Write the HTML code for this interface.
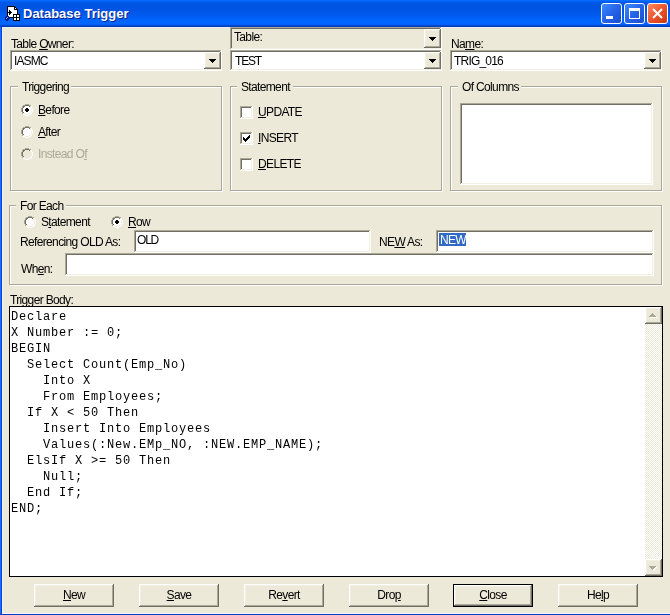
<!DOCTYPE html>
<html><head><meta charset="utf-8">
<style>
html,body{margin:0;padding:0;}
body{width:670px;height:615px;position:relative;overflow:hidden;background:#ece9d8;font-family:"Liberation Sans",sans-serif;}
div{position:absolute;box-sizing:border-box;}
.t{font-size:12px;line-height:14px;letter-spacing:-0.65px;white-space:nowrap;color:#000;will-change:transform;}
u{text-decoration:underline;text-decoration-thickness:1px;}
.dis{color:#aca899;}
.sunk{background:#fff;box-shadow:inset -1px -1px 0 #fff,inset 1px 1px 0 #aca899,inset -2px -2px 0 #f1efe2,inset 2px 2px 0 #716f64;}
.raised{background:#ece9d8;box-shadow:inset -1px -1px 0 #716f64,inset 1px 1px 0 #fff,inset -2px -2px 0 #aca899,inset 2px 2px 0 #f1efe2;}
.gl{border:1px solid #fff;}
.gd{border:1px solid #aca899;}
.glab{background:#ece9d8;}
.arrow{width:0;height:0;border-left:4px solid transparent;border-right:4px solid transparent;border-top:4px solid #000;}
.code{will-change:transform;font-family:"Liberation Mono",monospace;font-size:12px;letter-spacing:0.8px;line-height:16px;white-space:pre;color:#000;}
.btn{width:80px;height:23px;}
.btn .t{width:80px;text-align:center;left:0;top:4px;}
</style></head><body>

<!-- window frame -->
<div style="left:0;top:0;width:2px;height:615px;background:linear-gradient(90deg,#1c6cff 0,#1c6cff 1px,#0040d8 1px,#0040d8 2px);"></div>
<div style="left:2px;top:27px;width:1px;height:587px;background:#f4f6ff;"></div>
<div style="left:2px;top:613px;width:668px;height:1px;background:#f4f6ff;"></div>
<div style="left:0;top:614px;width:670px;height:1px;background:#0038c8;"></div>

<!-- title bar -->
<div style="left:0;top:0;width:670px;height:27px;background:linear-gradient(180deg,#0a6cff 0px,#0a6cff 1px,#0062f4 1px,#0062f4 2px,#0058e8 2px,#0054e3 6px,#0054e3 9px,#0058ea 13px,#0060f6 18px,#0066ff 21px,#0066ff 24px,#005af0 25px,#0a3cb4 26px,#0a3cb4 27px);"></div>
<div style="left:2px;top:27px;width:668px;height:1px;background:#e6eefc;"></div>
<!-- icon -->
<svg style="position:absolute;left:4px;top:6px;" width="17" height="15" shape-rendering="crispEdges"><rect x="3" y="0" width="8" height="1" fill="#000000"/><rect x="3" y="1" width="1" height="1" fill="#000000"/><rect x="4" y="1" width="6" height="1" fill="#ffffff"/><rect x="10" y="1" width="2" height="1" fill="#000000"/><rect x="3" y="2" width="1" height="1" fill="#000000"/><rect x="4" y="2" width="6" height="1" fill="#ffffff"/><rect x="10" y="2" width="1" height="1" fill="#000000"/><rect x="11" y="2" width="1" height="1" fill="#ffffff"/><rect x="12" y="2" width="1" height="1" fill="#000000"/><rect x="3" y="3" width="1" height="1" fill="#000000"/><rect x="4" y="3" width="6" height="1" fill="#ffffff"/><rect x="10" y="3" width="4" height="1" fill="#000000"/><rect x="3" y="4" width="1" height="1" fill="#000000"/><rect x="4" y="4" width="1" height="1" fill="#ffffff"/><rect x="5" y="4" width="1" height="1" fill="#000000"/><rect x="6" y="4" width="7" height="1" fill="#ffffff"/><rect x="13" y="4" width="1" height="1" fill="#000000"/><rect x="3" y="5" width="1" height="1" fill="#000000"/><rect x="4" y="5" width="1" height="1" fill="#ffffff"/><rect x="5" y="5" width="2" height="1" fill="#000000"/><rect x="7" y="5" width="6" height="1" fill="#ffffff"/><rect x="13" y="5" width="1" height="1" fill="#000000"/><rect x="3" y="6" width="5" height="1" fill="#000000"/><rect x="8" y="6" width="5" height="1" fill="#ffffff"/><rect x="13" y="6" width="1" height="1" fill="#000000"/><rect x="3" y="7" width="1" height="1" fill="#000000"/><rect x="4" y="7" width="1" height="1" fill="#ffffff"/><rect x="5" y="7" width="2" height="1" fill="#000000"/><rect x="7" y="7" width="6" height="1" fill="#ffffff"/><rect x="13" y="7" width="1" height="1" fill="#000000"/><rect x="3" y="8" width="1" height="1" fill="#000000"/><rect x="4" y="8" width="1" height="1" fill="#ffffff"/><rect x="5" y="8" width="1" height="1" fill="#000000"/><rect x="6" y="8" width="3" height="1" fill="#ffffff"/><rect x="9" y="8" width="7" height="1" fill="#000000"/><rect x="3" y="9" width="1" height="1" fill="#000000"/><rect x="4" y="9" width="5" height="1" fill="#ffffff"/><rect x="9" y="9" width="1" height="1" fill="#000000"/><rect x="10" y="9" width="2" height="1" fill="#ffffff"/><rect x="12" y="9" width="1" height="1" fill="#000000"/><rect x="13" y="9" width="2" height="1" fill="#ffffff"/><rect x="15" y="9" width="1" height="1" fill="#000000"/><rect x="2" y="10" width="3" height="1" fill="#001a80"/><rect x="5" y="10" width="4" height="1" fill="#ffffff"/><rect x="9" y="10" width="1" height="1" fill="#000000"/><rect x="10" y="10" width="2" height="1" fill="#ffffff"/><rect x="12" y="10" width="1" height="1" fill="#000000"/><rect x="13" y="10" width="2" height="1" fill="#ffffff"/><rect x="15" y="10" width="1" height="1" fill="#000000"/><rect x="1" y="11" width="2" height="1" fill="#001a80"/><rect x="3" y="11" width="1" height="1" fill="#8cb8ff"/><rect x="4" y="11" width="2" height="1" fill="#001a80"/><rect x="6" y="11" width="10" height="1" fill="#000000"/><rect x="1" y="12" width="1" height="1" fill="#001a80"/><rect x="2" y="12" width="1" height="1" fill="#8cb8ff"/><rect x="3" y="12" width="3" height="1" fill="#001a80"/><rect x="9" y="12" width="1" height="1" fill="#000000"/><rect x="10" y="12" width="2" height="1" fill="#ffffff"/><rect x="12" y="12" width="1" height="1" fill="#000000"/><rect x="13" y="12" width="2" height="1" fill="#ffffff"/><rect x="15" y="12" width="1" height="1" fill="#000000"/><rect x="1" y="13" width="4" height="1" fill="#001a80"/><rect x="9" y="13" width="1" height="1" fill="#000000"/><rect x="10" y="13" width="2" height="1" fill="#ffffff"/><rect x="12" y="13" width="1" height="1" fill="#000000"/><rect x="13" y="13" width="2" height="1" fill="#ffffff"/><rect x="15" y="13" width="1" height="1" fill="#000000"/><rect x="2" y="14" width="2" height="1" fill="#001a80"/><rect x="9" y="14" width="7" height="1" fill="#000000"/></svg>
<div style="left:23px;top:6px;font:bold 13px/16px 'Liberation Sans';color:#fff;white-space:nowrap;text-shadow:1px 1px 0 #0a1e8a;">Database Trigger</div>

<!-- caption buttons -->
<div style="left:601px;top:3px;width:21px;height:21px;border:1px solid #fff;border-radius:3px;background:linear-gradient(135deg,#3c8cff 0%,#2663e8 50%,#1a4fd0 100%);">
  <div style="left:4px;top:12px;width:7px;height:3px;background:#fff;"></div>
</div>
<div style="left:624px;top:3px;width:21px;height:21px;border:1px solid #fff;border-radius:3px;background:linear-gradient(135deg,#3c8cff 0%,#2663e8 50%,#1a4fd0 100%);">
  <div style="left:4px;top:4px;width:11px;height:11px;border:1px solid #fff;border-top-width:3px;"></div>
</div>
<div style="left:647px;top:3px;width:21px;height:21px;border:1px solid #fff;border-radius:3px;background:linear-gradient(135deg,#ff8a5a 0%,#e8502a 55%,#c83a14 100%);">
  <svg style="position:absolute;left:3px;top:3px" width="13" height="13" viewBox="0 0 13 13"><path d="M2 2 L11 11 M11 2 L2 11" stroke="#fff" stroke-width="2"/></svg>
</div>

<!-- Table Owner -->
<div class="t" style="left:11px;top:37px;">Table <u>O</u>wner:</div>
<div class="sunk" style="left:10px;top:50px;width:212px;height:21px;"></div>
<div class="t" style="left:14px;top:54px;letter-spacing:-0.9px;">IASMC</div>
<div class="raised" style="left:204px;top:52px;width:17px;height:17px;"><svg style="position:absolute;left:5px;top:7px;" width="8" height="5" shape-rendering="crispEdges"><rect x="0" y="0" width="7" height="1" fill="#000"/><rect x="1" y="1" width="5" height="1" fill="#000"/><rect x="2" y="2" width="3" height="1" fill="#000"/><rect x="3" y="3" width="1" height="1" fill="#000"/></svg></div>

<!-- Table: -->
<div class="sunk" style="left:230px;top:27px;width:212px;height:23px;background:#ece9d8;"></div>
<div class="t" style="left:234px;top:30px;">Table:</div>
<div class="raised" style="left:424px;top:29px;width:17px;height:19px;"><svg style="position:absolute;left:5px;top:8px;" width="8" height="5" shape-rendering="crispEdges"><rect x="0" y="0" width="7" height="1" fill="#000"/><rect x="1" y="1" width="5" height="1" fill="#000"/><rect x="2" y="2" width="3" height="1" fill="#000"/><rect x="3" y="3" width="1" height="1" fill="#000"/></svg></div>
<div class="sunk" style="left:230px;top:50px;width:212px;height:21px;"></div>
<div class="t" style="left:235px;top:54px;letter-spacing:-1.2px;">TEST</div>
<div class="raised" style="left:424px;top:52px;width:17px;height:17px;"><svg style="position:absolute;left:5px;top:7px;" width="8" height="5" shape-rendering="crispEdges"><rect x="0" y="0" width="7" height="1" fill="#000"/><rect x="1" y="1" width="5" height="1" fill="#000"/><rect x="2" y="2" width="3" height="1" fill="#000"/><rect x="3" y="3" width="1" height="1" fill="#000"/></svg></div>

<!-- Name -->
<div class="t" style="left:451px;top:37px;">Na<u>m</u>e:</div>
<div class="sunk" style="left:450px;top:50px;width:212px;height:21px;"></div>
<div class="t" style="left:454px;top:54px;letter-spacing:-0.8px;">TRIG_016</div>
<div class="raised" style="left:644px;top:52px;width:17px;height:17px;"><svg style="position:absolute;left:5px;top:7px;" width="8" height="5" shape-rendering="crispEdges"><rect x="0" y="0" width="7" height="1" fill="#000"/><rect x="1" y="1" width="5" height="1" fill="#000"/><rect x="2" y="2" width="3" height="1" fill="#000"/><rect x="3" y="3" width="1" height="1" fill="#000"/></svg></div>

<!-- Triggering group -->
<div class="gl" style="left:11px;top:87px;width:212px;height:105px;"></div>
<div class="gd" style="left:10px;top:86px;width:212px;height:105px;"></div>
<div class="t glab" style="left:18px;top:80px;padding:0 2px 0 4px;">Triggering</div>

<svg style="position:absolute;left:21px;top:104px;" width="12" height="12" shape-rendering="crispEdges"><rect x="4" y="0" width="4" height="1" fill="#aca899"/><rect x="2" y="1" width="2" height="1" fill="#aca899"/><rect x="4" y="1" width="4" height="1" fill="#716f64"/><rect x="8" y="1" width="2" height="1" fill="#aca899"/><rect x="1" y="2" width="1" height="1" fill="#aca899"/><rect x="2" y="2" width="2" height="1" fill="#716f64"/><rect x="4" y="2" width="4" height="1" fill="#ffffff"/><rect x="8" y="2" width="1" height="1" fill="#716f64"/><rect x="9" y="2" width="1" height="1" fill="#f1efe2"/><rect x="10" y="2" width="1" height="1" fill="#ffffff"/><rect x="1" y="3" width="1" height="1" fill="#aca899"/><rect x="2" y="3" width="1" height="1" fill="#716f64"/><rect x="3" y="3" width="6" height="1" fill="#ffffff"/><rect x="9" y="3" width="1" height="1" fill="#f1efe2"/><rect x="10" y="3" width="1" height="1" fill="#ffffff"/><rect x="0" y="4" width="1" height="1" fill="#aca899"/><rect x="1" y="4" width="1" height="1" fill="#716f64"/><rect x="2" y="4" width="3" height="1" fill="#ffffff"/><rect x="5" y="4" width="2" height="1" fill="#000"/><rect x="7" y="4" width="3" height="1" fill="#ffffff"/><rect x="10" y="4" width="1" height="1" fill="#f1efe2"/><rect x="11" y="4" width="1" height="1" fill="#ffffff"/><rect x="0" y="5" width="1" height="1" fill="#aca899"/><rect x="1" y="5" width="1" height="1" fill="#716f64"/><rect x="2" y="5" width="2" height="1" fill="#ffffff"/><rect x="4" y="5" width="4" height="1" fill="#000"/><rect x="8" y="5" width="2" height="1" fill="#ffffff"/><rect x="10" y="5" width="1" height="1" fill="#f1efe2"/><rect x="11" y="5" width="1" height="1" fill="#ffffff"/><rect x="0" y="6" width="1" height="1" fill="#aca899"/><rect x="1" y="6" width="1" height="1" fill="#716f64"/><rect x="2" y="6" width="2" height="1" fill="#ffffff"/><rect x="4" y="6" width="4" height="1" fill="#000"/><rect x="8" y="6" width="2" height="1" fill="#ffffff"/><rect x="10" y="6" width="1" height="1" fill="#f1efe2"/><rect x="11" y="6" width="1" height="1" fill="#ffffff"/><rect x="0" y="7" width="1" height="1" fill="#aca899"/><rect x="1" y="7" width="1" height="1" fill="#716f64"/><rect x="2" y="7" width="3" height="1" fill="#ffffff"/><rect x="5" y="7" width="2" height="1" fill="#000"/><rect x="7" y="7" width="3" height="1" fill="#ffffff"/><rect x="10" y="7" width="1" height="1" fill="#f1efe2"/><rect x="11" y="7" width="1" height="1" fill="#ffffff"/><rect x="1" y="8" width="1" height="1" fill="#aca899"/><rect x="2" y="8" width="1" height="1" fill="#716f64"/><rect x="3" y="8" width="6" height="1" fill="#ffffff"/><rect x="9" y="8" width="1" height="1" fill="#f1efe2"/><rect x="10" y="8" width="1" height="1" fill="#ffffff"/><rect x="1" y="9" width="1" height="1" fill="#aca899"/><rect x="2" y="9" width="2" height="1" fill="#f1efe2"/><rect x="4" y="9" width="4" height="1" fill="#ffffff"/><rect x="8" y="9" width="2" height="1" fill="#f1efe2"/><rect x="10" y="9" width="1" height="1" fill="#ffffff"/><rect x="2" y="10" width="2" height="1" fill="#ffffff"/><rect x="4" y="10" width="4" height="1" fill="#f1efe2"/><rect x="8" y="10" width="2" height="1" fill="#ffffff"/><rect x="4" y="11" width="4" height="1" fill="#ffffff"/></svg>
<div class="t" style="left:38px;top:103px;"><u>B</u>efore</div>
<svg style="position:absolute;left:21px;top:126px;" width="12" height="12" shape-rendering="crispEdges"><rect x="4" y="0" width="4" height="1" fill="#aca899"/><rect x="2" y="1" width="2" height="1" fill="#aca899"/><rect x="4" y="1" width="4" height="1" fill="#716f64"/><rect x="8" y="1" width="2" height="1" fill="#aca899"/><rect x="1" y="2" width="1" height="1" fill="#aca899"/><rect x="2" y="2" width="2" height="1" fill="#716f64"/><rect x="4" y="2" width="4" height="1" fill="#ffffff"/><rect x="8" y="2" width="1" height="1" fill="#716f64"/><rect x="9" y="2" width="1" height="1" fill="#f1efe2"/><rect x="10" y="2" width="1" height="1" fill="#ffffff"/><rect x="1" y="3" width="1" height="1" fill="#aca899"/><rect x="2" y="3" width="1" height="1" fill="#716f64"/><rect x="3" y="3" width="6" height="1" fill="#ffffff"/><rect x="9" y="3" width="1" height="1" fill="#f1efe2"/><rect x="10" y="3" width="1" height="1" fill="#ffffff"/><rect x="0" y="4" width="1" height="1" fill="#aca899"/><rect x="1" y="4" width="1" height="1" fill="#716f64"/><rect x="2" y="4" width="8" height="1" fill="#ffffff"/><rect x="10" y="4" width="1" height="1" fill="#f1efe2"/><rect x="11" y="4" width="1" height="1" fill="#ffffff"/><rect x="0" y="5" width="1" height="1" fill="#aca899"/><rect x="1" y="5" width="1" height="1" fill="#716f64"/><rect x="2" y="5" width="8" height="1" fill="#ffffff"/><rect x="10" y="5" width="1" height="1" fill="#f1efe2"/><rect x="11" y="5" width="1" height="1" fill="#ffffff"/><rect x="0" y="6" width="1" height="1" fill="#aca899"/><rect x="1" y="6" width="1" height="1" fill="#716f64"/><rect x="2" y="6" width="8" height="1" fill="#ffffff"/><rect x="10" y="6" width="1" height="1" fill="#f1efe2"/><rect x="11" y="6" width="1" height="1" fill="#ffffff"/><rect x="0" y="7" width="1" height="1" fill="#aca899"/><rect x="1" y="7" width="1" height="1" fill="#716f64"/><rect x="2" y="7" width="8" height="1" fill="#ffffff"/><rect x="10" y="7" width="1" height="1" fill="#f1efe2"/><rect x="11" y="7" width="1" height="1" fill="#ffffff"/><rect x="1" y="8" width="1" height="1" fill="#aca899"/><rect x="2" y="8" width="1" height="1" fill="#716f64"/><rect x="3" y="8" width="6" height="1" fill="#ffffff"/><rect x="9" y="8" width="1" height="1" fill="#f1efe2"/><rect x="10" y="8" width="1" height="1" fill="#ffffff"/><rect x="1" y="9" width="1" height="1" fill="#aca899"/><rect x="2" y="9" width="2" height="1" fill="#f1efe2"/><rect x="4" y="9" width="4" height="1" fill="#ffffff"/><rect x="8" y="9" width="2" height="1" fill="#f1efe2"/><rect x="10" y="9" width="1" height="1" fill="#ffffff"/><rect x="2" y="10" width="2" height="1" fill="#ffffff"/><rect x="4" y="10" width="4" height="1" fill="#f1efe2"/><rect x="8" y="10" width="2" height="1" fill="#ffffff"/><rect x="4" y="11" width="4" height="1" fill="#ffffff"/></svg>
<div class="t" style="left:38px;top:125px;"><u>A</u>fter</div>
<svg style="position:absolute;left:21px;top:148px;" width="12" height="12" shape-rendering="crispEdges"><rect x="4" y="0" width="4" height="1" fill="#aca899"/><rect x="2" y="1" width="2" height="1" fill="#aca899"/><rect x="4" y="1" width="4" height="1" fill="#716f64"/><rect x="8" y="1" width="2" height="1" fill="#aca899"/><rect x="1" y="2" width="1" height="1" fill="#aca899"/><rect x="2" y="2" width="2" height="1" fill="#716f64"/><rect x="4" y="2" width="4" height="1" fill="#ece9d8"/><rect x="8" y="2" width="1" height="1" fill="#716f64"/><rect x="9" y="2" width="1" height="1" fill="#f1efe2"/><rect x="10" y="2" width="1" height="1" fill="#ffffff"/><rect x="1" y="3" width="1" height="1" fill="#aca899"/><rect x="2" y="3" width="1" height="1" fill="#716f64"/><rect x="3" y="3" width="6" height="1" fill="#ece9d8"/><rect x="9" y="3" width="1" height="1" fill="#f1efe2"/><rect x="10" y="3" width="1" height="1" fill="#ffffff"/><rect x="0" y="4" width="1" height="1" fill="#aca899"/><rect x="1" y="4" width="1" height="1" fill="#716f64"/><rect x="2" y="4" width="8" height="1" fill="#ece9d8"/><rect x="10" y="4" width="1" height="1" fill="#f1efe2"/><rect x="11" y="4" width="1" height="1" fill="#ffffff"/><rect x="0" y="5" width="1" height="1" fill="#aca899"/><rect x="1" y="5" width="1" height="1" fill="#716f64"/><rect x="2" y="5" width="8" height="1" fill="#ece9d8"/><rect x="10" y="5" width="1" height="1" fill="#f1efe2"/><rect x="11" y="5" width="1" height="1" fill="#ffffff"/><rect x="0" y="6" width="1" height="1" fill="#aca899"/><rect x="1" y="6" width="1" height="1" fill="#716f64"/><rect x="2" y="6" width="8" height="1" fill="#ece9d8"/><rect x="10" y="6" width="1" height="1" fill="#f1efe2"/><rect x="11" y="6" width="1" height="1" fill="#ffffff"/><rect x="0" y="7" width="1" height="1" fill="#aca899"/><rect x="1" y="7" width="1" height="1" fill="#716f64"/><rect x="2" y="7" width="8" height="1" fill="#ece9d8"/><rect x="10" y="7" width="1" height="1" fill="#f1efe2"/><rect x="11" y="7" width="1" height="1" fill="#ffffff"/><rect x="1" y="8" width="1" height="1" fill="#aca899"/><rect x="2" y="8" width="1" height="1" fill="#716f64"/><rect x="3" y="8" width="6" height="1" fill="#ece9d8"/><rect x="9" y="8" width="1" height="1" fill="#f1efe2"/><rect x="10" y="8" width="1" height="1" fill="#ffffff"/><rect x="1" y="9" width="1" height="1" fill="#aca899"/><rect x="2" y="9" width="2" height="1" fill="#f1efe2"/><rect x="4" y="9" width="4" height="1" fill="#ece9d8"/><rect x="8" y="9" width="2" height="1" fill="#f1efe2"/><rect x="10" y="9" width="1" height="1" fill="#ffffff"/><rect x="2" y="10" width="2" height="1" fill="#ffffff"/><rect x="4" y="10" width="4" height="1" fill="#f1efe2"/><rect x="8" y="10" width="2" height="1" fill="#ffffff"/><rect x="4" y="11" width="4" height="1" fill="#ffffff"/></svg>
<div class="t dis" style="left:38px;top:147px;">Instead O<u>f</u></div>

<!-- Statement group -->
<div class="gl" style="left:231px;top:87px;width:212px;height:105px;"></div>
<div class="gd" style="left:230px;top:86px;width:212px;height:105px;"></div>
<div class="t glab" style="left:237px;top:80px;padding:0 3px 0 4px;">Statement</div>

<svg style="position:absolute;left:240px;top:106px;" width="13" height="13" shape-rendering="crispEdges"><rect x="0" y="0" width="12" height="1" fill="#aca899"/><rect x="12" y="0" width="1" height="1" fill="#ffffff"/><rect x="0" y="1" width="1" height="1" fill="#aca899"/><rect x="1" y="1" width="10" height="1" fill="#716f64"/><rect x="11" y="1" width="1" height="1" fill="#f1efe2"/><rect x="12" y="1" width="1" height="1" fill="#ffffff"/><rect x="0" y="2" width="1" height="1" fill="#aca899"/><rect x="1" y="2" width="1" height="1" fill="#716f64"/><rect x="2" y="2" width="9" height="1" fill="#ffffff"/><rect x="11" y="2" width="1" height="1" fill="#f1efe2"/><rect x="12" y="2" width="1" height="1" fill="#ffffff"/><rect x="0" y="3" width="1" height="1" fill="#aca899"/><rect x="1" y="3" width="1" height="1" fill="#716f64"/><rect x="2" y="3" width="9" height="1" fill="#ffffff"/><rect x="11" y="3" width="1" height="1" fill="#f1efe2"/><rect x="12" y="3" width="1" height="1" fill="#ffffff"/><rect x="0" y="4" width="1" height="1" fill="#aca899"/><rect x="1" y="4" width="1" height="1" fill="#716f64"/><rect x="2" y="4" width="9" height="1" fill="#ffffff"/><rect x="11" y="4" width="1" height="1" fill="#f1efe2"/><rect x="12" y="4" width="1" height="1" fill="#ffffff"/><rect x="0" y="5" width="1" height="1" fill="#aca899"/><rect x="1" y="5" width="1" height="1" fill="#716f64"/><rect x="2" y="5" width="9" height="1" fill="#ffffff"/><rect x="11" y="5" width="1" height="1" fill="#f1efe2"/><rect x="12" y="5" width="1" height="1" fill="#ffffff"/><rect x="0" y="6" width="1" height="1" fill="#aca899"/><rect x="1" y="6" width="1" height="1" fill="#716f64"/><rect x="2" y="6" width="9" height="1" fill="#ffffff"/><rect x="11" y="6" width="1" height="1" fill="#f1efe2"/><rect x="12" y="6" width="1" height="1" fill="#ffffff"/><rect x="0" y="7" width="1" height="1" fill="#aca899"/><rect x="1" y="7" width="1" height="1" fill="#716f64"/><rect x="2" y="7" width="9" height="1" fill="#ffffff"/><rect x="11" y="7" width="1" height="1" fill="#f1efe2"/><rect x="12" y="7" width="1" height="1" fill="#ffffff"/><rect x="0" y="8" width="1" height="1" fill="#aca899"/><rect x="1" y="8" width="1" height="1" fill="#716f64"/><rect x="2" y="8" width="9" height="1" fill="#ffffff"/><rect x="11" y="8" width="1" height="1" fill="#f1efe2"/><rect x="12" y="8" width="1" height="1" fill="#ffffff"/><rect x="0" y="9" width="1" height="1" fill="#aca899"/><rect x="1" y="9" width="1" height="1" fill="#716f64"/><rect x="2" y="9" width="9" height="1" fill="#ffffff"/><rect x="11" y="9" width="1" height="1" fill="#f1efe2"/><rect x="12" y="9" width="1" height="1" fill="#ffffff"/><rect x="0" y="10" width="1" height="1" fill="#aca899"/><rect x="1" y="10" width="1" height="1" fill="#716f64"/><rect x="2" y="10" width="9" height="1" fill="#ffffff"/><rect x="11" y="10" width="1" height="1" fill="#f1efe2"/><rect x="12" y="10" width="1" height="1" fill="#ffffff"/><rect x="0" y="11" width="1" height="1" fill="#aca899"/><rect x="1" y="11" width="11" height="1" fill="#f1efe2"/><rect x="12" y="11" width="1" height="1" fill="#ffffff"/><rect x="0" y="12" width="13" height="1" fill="#ffffff"/></svg>
<div class="t" style="left:258px;top:105px;"><u>U</u>PDATE</div>
<svg style="position:absolute;left:240px;top:132px;" width="13" height="13" shape-rendering="crispEdges"><rect x="0" y="0" width="12" height="1" fill="#aca899"/><rect x="12" y="0" width="1" height="1" fill="#ffffff"/><rect x="0" y="1" width="1" height="1" fill="#aca899"/><rect x="1" y="1" width="10" height="1" fill="#716f64"/><rect x="11" y="1" width="1" height="1" fill="#f1efe2"/><rect x="12" y="1" width="1" height="1" fill="#ffffff"/><rect x="0" y="2" width="1" height="1" fill="#aca899"/><rect x="1" y="2" width="1" height="1" fill="#716f64"/><rect x="2" y="2" width="9" height="1" fill="#ffffff"/><rect x="11" y="2" width="1" height="1" fill="#f1efe2"/><rect x="12" y="2" width="1" height="1" fill="#ffffff"/><rect x="0" y="3" width="1" height="1" fill="#aca899"/><rect x="1" y="3" width="1" height="1" fill="#716f64"/><rect x="2" y="3" width="7" height="1" fill="#ffffff"/><rect x="9" y="3" width="1" height="1" fill="#000"/><rect x="10" y="3" width="1" height="1" fill="#ffffff"/><rect x="11" y="3" width="1" height="1" fill="#f1efe2"/><rect x="12" y="3" width="1" height="1" fill="#ffffff"/><rect x="0" y="4" width="1" height="1" fill="#aca899"/><rect x="1" y="4" width="1" height="1" fill="#716f64"/><rect x="2" y="4" width="6" height="1" fill="#ffffff"/><rect x="8" y="4" width="2" height="1" fill="#000"/><rect x="10" y="4" width="1" height="1" fill="#ffffff"/><rect x="11" y="4" width="1" height="1" fill="#f1efe2"/><rect x="12" y="4" width="1" height="1" fill="#ffffff"/><rect x="0" y="5" width="1" height="1" fill="#aca899"/><rect x="1" y="5" width="1" height="1" fill="#716f64"/><rect x="2" y="5" width="1" height="1" fill="#ffffff"/><rect x="3" y="5" width="1" height="1" fill="#000"/><rect x="4" y="5" width="3" height="1" fill="#ffffff"/><rect x="7" y="5" width="3" height="1" fill="#000"/><rect x="10" y="5" width="1" height="1" fill="#ffffff"/><rect x="11" y="5" width="1" height="1" fill="#f1efe2"/><rect x="12" y="5" width="1" height="1" fill="#ffffff"/><rect x="0" y="6" width="1" height="1" fill="#aca899"/><rect x="1" y="6" width="1" height="1" fill="#716f64"/><rect x="2" y="6" width="1" height="1" fill="#ffffff"/><rect x="3" y="6" width="2" height="1" fill="#000"/><rect x="5" y="6" width="1" height="1" fill="#ffffff"/><rect x="6" y="6" width="3" height="1" fill="#000"/><rect x="9" y="6" width="2" height="1" fill="#ffffff"/><rect x="11" y="6" width="1" height="1" fill="#f1efe2"/><rect x="12" y="6" width="1" height="1" fill="#ffffff"/><rect x="0" y="7" width="1" height="1" fill="#aca899"/><rect x="1" y="7" width="1" height="1" fill="#716f64"/><rect x="2" y="7" width="1" height="1" fill="#ffffff"/><rect x="3" y="7" width="5" height="1" fill="#000"/><rect x="8" y="7" width="3" height="1" fill="#ffffff"/><rect x="11" y="7" width="1" height="1" fill="#f1efe2"/><rect x="12" y="7" width="1" height="1" fill="#ffffff"/><rect x="0" y="8" width="1" height="1" fill="#aca899"/><rect x="1" y="8" width="1" height="1" fill="#716f64"/><rect x="2" y="8" width="2" height="1" fill="#ffffff"/><rect x="4" y="8" width="3" height="1" fill="#000"/><rect x="7" y="8" width="4" height="1" fill="#ffffff"/><rect x="11" y="8" width="1" height="1" fill="#f1efe2"/><rect x="12" y="8" width="1" height="1" fill="#ffffff"/><rect x="0" y="9" width="1" height="1" fill="#aca899"/><rect x="1" y="9" width="1" height="1" fill="#716f64"/><rect x="2" y="9" width="3" height="1" fill="#ffffff"/><rect x="5" y="9" width="1" height="1" fill="#000"/><rect x="6" y="9" width="5" height="1" fill="#ffffff"/><rect x="11" y="9" width="1" height="1" fill="#f1efe2"/><rect x="12" y="9" width="1" height="1" fill="#ffffff"/><rect x="0" y="10" width="1" height="1" fill="#aca899"/><rect x="1" y="10" width="1" height="1" fill="#716f64"/><rect x="2" y="10" width="9" height="1" fill="#ffffff"/><rect x="11" y="10" width="1" height="1" fill="#f1efe2"/><rect x="12" y="10" width="1" height="1" fill="#ffffff"/><rect x="0" y="11" width="1" height="1" fill="#aca899"/><rect x="1" y="11" width="11" height="1" fill="#f1efe2"/><rect x="12" y="11" width="1" height="1" fill="#ffffff"/><rect x="0" y="12" width="13" height="1" fill="#ffffff"/></svg>
<div class="t" style="left:258px;top:131px;"><u>I</u>NSERT</div>
<svg style="position:absolute;left:240px;top:158px;" width="13" height="13" shape-rendering="crispEdges"><rect x="0" y="0" width="12" height="1" fill="#aca899"/><rect x="12" y="0" width="1" height="1" fill="#ffffff"/><rect x="0" y="1" width="1" height="1" fill="#aca899"/><rect x="1" y="1" width="10" height="1" fill="#716f64"/><rect x="11" y="1" width="1" height="1" fill="#f1efe2"/><rect x="12" y="1" width="1" height="1" fill="#ffffff"/><rect x="0" y="2" width="1" height="1" fill="#aca899"/><rect x="1" y="2" width="1" height="1" fill="#716f64"/><rect x="2" y="2" width="9" height="1" fill="#ffffff"/><rect x="11" y="2" width="1" height="1" fill="#f1efe2"/><rect x="12" y="2" width="1" height="1" fill="#ffffff"/><rect x="0" y="3" width="1" height="1" fill="#aca899"/><rect x="1" y="3" width="1" height="1" fill="#716f64"/><rect x="2" y="3" width="9" height="1" fill="#ffffff"/><rect x="11" y="3" width="1" height="1" fill="#f1efe2"/><rect x="12" y="3" width="1" height="1" fill="#ffffff"/><rect x="0" y="4" width="1" height="1" fill="#aca899"/><rect x="1" y="4" width="1" height="1" fill="#716f64"/><rect x="2" y="4" width="9" height="1" fill="#ffffff"/><rect x="11" y="4" width="1" height="1" fill="#f1efe2"/><rect x="12" y="4" width="1" height="1" fill="#ffffff"/><rect x="0" y="5" width="1" height="1" fill="#aca899"/><rect x="1" y="5" width="1" height="1" fill="#716f64"/><rect x="2" y="5" width="9" height="1" fill="#ffffff"/><rect x="11" y="5" width="1" height="1" fill="#f1efe2"/><rect x="12" y="5" width="1" height="1" fill="#ffffff"/><rect x="0" y="6" width="1" height="1" fill="#aca899"/><rect x="1" y="6" width="1" height="1" fill="#716f64"/><rect x="2" y="6" width="9" height="1" fill="#ffffff"/><rect x="11" y="6" width="1" height="1" fill="#f1efe2"/><rect x="12" y="6" width="1" height="1" fill="#ffffff"/><rect x="0" y="7" width="1" height="1" fill="#aca899"/><rect x="1" y="7" width="1" height="1" fill="#716f64"/><rect x="2" y="7" width="9" height="1" fill="#ffffff"/><rect x="11" y="7" width="1" height="1" fill="#f1efe2"/><rect x="12" y="7" width="1" height="1" fill="#ffffff"/><rect x="0" y="8" width="1" height="1" fill="#aca899"/><rect x="1" y="8" width="1" height="1" fill="#716f64"/><rect x="2" y="8" width="9" height="1" fill="#ffffff"/><rect x="11" y="8" width="1" height="1" fill="#f1efe2"/><rect x="12" y="8" width="1" height="1" fill="#ffffff"/><rect x="0" y="9" width="1" height="1" fill="#aca899"/><rect x="1" y="9" width="1" height="1" fill="#716f64"/><rect x="2" y="9" width="9" height="1" fill="#ffffff"/><rect x="11" y="9" width="1" height="1" fill="#f1efe2"/><rect x="12" y="9" width="1" height="1" fill="#ffffff"/><rect x="0" y="10" width="1" height="1" fill="#aca899"/><rect x="1" y="10" width="1" height="1" fill="#716f64"/><rect x="2" y="10" width="9" height="1" fill="#ffffff"/><rect x="11" y="10" width="1" height="1" fill="#f1efe2"/><rect x="12" y="10" width="1" height="1" fill="#ffffff"/><rect x="0" y="11" width="1" height="1" fill="#aca899"/><rect x="1" y="11" width="11" height="1" fill="#f1efe2"/><rect x="12" y="11" width="1" height="1" fill="#ffffff"/><rect x="0" y="12" width="13" height="1" fill="#ffffff"/></svg>
<div class="t" style="left:258px;top:157px;"><u>D</u>ELETE</div>

<!-- Of Columns group -->
<div class="gl" style="left:451px;top:87px;width:212px;height:105px;"></div>
<div class="gd" style="left:450px;top:86px;width:212px;height:105px;"></div>
<div class="t glab" style="left:458px;top:80px;padding:0 2px 0 4px;">Of Columns</div>
<div class="sunk" style="left:460px;top:103px;width:193px;height:82px;"></div>

<!-- For Each group -->
<div class="gl" style="left:10px;top:206px;width:653px;height:80px;"></div>
<div class="gd" style="left:9px;top:205px;width:653px;height:80px;"></div>
<div class="t glab" style="left:16px;top:199px;padding:0 2px 0 4px;">For Each</div>

<svg style="position:absolute;left:24px;top:216px;" width="12" height="12" shape-rendering="crispEdges"><rect x="4" y="0" width="4" height="1" fill="#aca899"/><rect x="2" y="1" width="2" height="1" fill="#aca899"/><rect x="4" y="1" width="4" height="1" fill="#716f64"/><rect x="8" y="1" width="2" height="1" fill="#aca899"/><rect x="1" y="2" width="1" height="1" fill="#aca899"/><rect x="2" y="2" width="2" height="1" fill="#716f64"/><rect x="4" y="2" width="4" height="1" fill="#ffffff"/><rect x="8" y="2" width="1" height="1" fill="#716f64"/><rect x="9" y="2" width="1" height="1" fill="#f1efe2"/><rect x="10" y="2" width="1" height="1" fill="#ffffff"/><rect x="1" y="3" width="1" height="1" fill="#aca899"/><rect x="2" y="3" width="1" height="1" fill="#716f64"/><rect x="3" y="3" width="6" height="1" fill="#ffffff"/><rect x="9" y="3" width="1" height="1" fill="#f1efe2"/><rect x="10" y="3" width="1" height="1" fill="#ffffff"/><rect x="0" y="4" width="1" height="1" fill="#aca899"/><rect x="1" y="4" width="1" height="1" fill="#716f64"/><rect x="2" y="4" width="8" height="1" fill="#ffffff"/><rect x="10" y="4" width="1" height="1" fill="#f1efe2"/><rect x="11" y="4" width="1" height="1" fill="#ffffff"/><rect x="0" y="5" width="1" height="1" fill="#aca899"/><rect x="1" y="5" width="1" height="1" fill="#716f64"/><rect x="2" y="5" width="8" height="1" fill="#ffffff"/><rect x="10" y="5" width="1" height="1" fill="#f1efe2"/><rect x="11" y="5" width="1" height="1" fill="#ffffff"/><rect x="0" y="6" width="1" height="1" fill="#aca899"/><rect x="1" y="6" width="1" height="1" fill="#716f64"/><rect x="2" y="6" width="8" height="1" fill="#ffffff"/><rect x="10" y="6" width="1" height="1" fill="#f1efe2"/><rect x="11" y="6" width="1" height="1" fill="#ffffff"/><rect x="0" y="7" width="1" height="1" fill="#aca899"/><rect x="1" y="7" width="1" height="1" fill="#716f64"/><rect x="2" y="7" width="8" height="1" fill="#ffffff"/><rect x="10" y="7" width="1" height="1" fill="#f1efe2"/><rect x="11" y="7" width="1" height="1" fill="#ffffff"/><rect x="1" y="8" width="1" height="1" fill="#aca899"/><rect x="2" y="8" width="1" height="1" fill="#716f64"/><rect x="3" y="8" width="6" height="1" fill="#ffffff"/><rect x="9" y="8" width="1" height="1" fill="#f1efe2"/><rect x="10" y="8" width="1" height="1" fill="#ffffff"/><rect x="1" y="9" width="1" height="1" fill="#aca899"/><rect x="2" y="9" width="2" height="1" fill="#f1efe2"/><rect x="4" y="9" width="4" height="1" fill="#ffffff"/><rect x="8" y="9" width="2" height="1" fill="#f1efe2"/><rect x="10" y="9" width="1" height="1" fill="#ffffff"/><rect x="2" y="10" width="2" height="1" fill="#ffffff"/><rect x="4" y="10" width="4" height="1" fill="#f1efe2"/><rect x="8" y="10" width="2" height="1" fill="#ffffff"/><rect x="4" y="11" width="4" height="1" fill="#ffffff"/></svg>
<div class="t" style="left:41px;top:215px;">S<u>t</u>atement</div>
<svg style="position:absolute;left:111px;top:216px;" width="12" height="12" shape-rendering="crispEdges"><rect x="4" y="0" width="4" height="1" fill="#aca899"/><rect x="2" y="1" width="2" height="1" fill="#aca899"/><rect x="4" y="1" width="4" height="1" fill="#716f64"/><rect x="8" y="1" width="2" height="1" fill="#aca899"/><rect x="1" y="2" width="1" height="1" fill="#aca899"/><rect x="2" y="2" width="2" height="1" fill="#716f64"/><rect x="4" y="2" width="4" height="1" fill="#ffffff"/><rect x="8" y="2" width="1" height="1" fill="#716f64"/><rect x="9" y="2" width="1" height="1" fill="#f1efe2"/><rect x="10" y="2" width="1" height="1" fill="#ffffff"/><rect x="1" y="3" width="1" height="1" fill="#aca899"/><rect x="2" y="3" width="1" height="1" fill="#716f64"/><rect x="3" y="3" width="6" height="1" fill="#ffffff"/><rect x="9" y="3" width="1" height="1" fill="#f1efe2"/><rect x="10" y="3" width="1" height="1" fill="#ffffff"/><rect x="0" y="4" width="1" height="1" fill="#aca899"/><rect x="1" y="4" width="1" height="1" fill="#716f64"/><rect x="2" y="4" width="3" height="1" fill="#ffffff"/><rect x="5" y="4" width="2" height="1" fill="#000"/><rect x="7" y="4" width="3" height="1" fill="#ffffff"/><rect x="10" y="4" width="1" height="1" fill="#f1efe2"/><rect x="11" y="4" width="1" height="1" fill="#ffffff"/><rect x="0" y="5" width="1" height="1" fill="#aca899"/><rect x="1" y="5" width="1" height="1" fill="#716f64"/><rect x="2" y="5" width="2" height="1" fill="#ffffff"/><rect x="4" y="5" width="4" height="1" fill="#000"/><rect x="8" y="5" width="2" height="1" fill="#ffffff"/><rect x="10" y="5" width="1" height="1" fill="#f1efe2"/><rect x="11" y="5" width="1" height="1" fill="#ffffff"/><rect x="0" y="6" width="1" height="1" fill="#aca899"/><rect x="1" y="6" width="1" height="1" fill="#716f64"/><rect x="2" y="6" width="2" height="1" fill="#ffffff"/><rect x="4" y="6" width="4" height="1" fill="#000"/><rect x="8" y="6" width="2" height="1" fill="#ffffff"/><rect x="10" y="6" width="1" height="1" fill="#f1efe2"/><rect x="11" y="6" width="1" height="1" fill="#ffffff"/><rect x="0" y="7" width="1" height="1" fill="#aca899"/><rect x="1" y="7" width="1" height="1" fill="#716f64"/><rect x="2" y="7" width="3" height="1" fill="#ffffff"/><rect x="5" y="7" width="2" height="1" fill="#000"/><rect x="7" y="7" width="3" height="1" fill="#ffffff"/><rect x="10" y="7" width="1" height="1" fill="#f1efe2"/><rect x="11" y="7" width="1" height="1" fill="#ffffff"/><rect x="1" y="8" width="1" height="1" fill="#aca899"/><rect x="2" y="8" width="1" height="1" fill="#716f64"/><rect x="3" y="8" width="6" height="1" fill="#ffffff"/><rect x="9" y="8" width="1" height="1" fill="#f1efe2"/><rect x="10" y="8" width="1" height="1" fill="#ffffff"/><rect x="1" y="9" width="1" height="1" fill="#aca899"/><rect x="2" y="9" width="2" height="1" fill="#f1efe2"/><rect x="4" y="9" width="4" height="1" fill="#ffffff"/><rect x="8" y="9" width="2" height="1" fill="#f1efe2"/><rect x="10" y="9" width="1" height="1" fill="#ffffff"/><rect x="2" y="10" width="2" height="1" fill="#ffffff"/><rect x="4" y="10" width="4" height="1" fill="#f1efe2"/><rect x="8" y="10" width="2" height="1" fill="#ffffff"/><rect x="4" y="11" width="4" height="1" fill="#ffffff"/></svg>
<div class="t" style="left:128px;top:215px;"><u>R</u>ow</div>

<div class="t" style="left:20px;top:235px;">Referencing OLD As:</div>
<div class="sunk" style="left:134px;top:230px;width:237px;height:23px;"></div>
<div class="t" style="left:137px;top:233px;letter-spacing:-1.2px;">OLD</div>
<div class="t" style="left:379px;top:235px;">NE<u>W</u> As:</div>
<div class="sunk" style="left:436px;top:230px;width:218px;height:23px;"></div>
<div style="left:439px;top:233px;width:27px;height:13px;background:#316ac5;"></div>
<div class="t" style="left:440px;top:233px;color:#fff;">NEW</div>

<div class="t" style="left:21px;top:262px;">Wh<u>e</u>n:</div>
<div class="sunk" style="left:65px;top:253px;width:589px;height:23px;"></div>

<!-- Trigger body -->
<div class="t" style="left:10px;top:293px;">Trigger Body:</div>
<div style="left:9px;top:306px;width:654px;height:271px;border:1px solid #000;background:#fff;"></div>
<div class="code" style="left:11px;top:309px;">Declare
X Number := 0;
BEGIN
  Select Count(Emp_No)
    Into X
    From Employees;
  If X &lt; 50 Then
    Insert Into Employees
    Values(:New.EMp_NO, :NEW.EMP_NAME);
  ElsIf X &gt;= 50 Then
    Null;
  End If;
END;</div>
<!-- scrollbar -->
<svg style="position:absolute;left:645px;top:307px" width="17" height="269" shape-rendering="crispEdges"><defs><pattern id="chk" width="2" height="2" patternUnits="userSpaceOnUse"><rect width="2" height="2" fill="#fff"/><rect x="1" y="0" width="1" height="1" fill="#ece9d8"/><rect x="0" y="1" width="1" height="1" fill="#ece9d8"/></pattern></defs><rect width="17" height="269" fill="url(#chk)"/></svg>
<div class="raised" style="left:645px;top:307px;width:17px;height:17px;"><svg style="position:absolute;left:4px;top:6px;" width="8" height="5" shape-rendering="crispEdges"><rect x="3" y="0" width="1" height="1" fill="#aca899"/><rect x="2" y="1" width="3" height="1" fill="#aca899"/><rect x="1" y="2" width="5" height="1" fill="#aca899"/><rect x="0" y="3" width="7" height="1" fill="#aca899"/><rect x="1" y="4" width="7" height="1" fill="#fff"/></svg></div>
<div class="raised" style="left:645px;top:559px;width:17px;height:17px;"><svg style="position:absolute;left:4px;top:7px;" width="8" height="5" shape-rendering="crispEdges"><rect x="0" y="0" width="7" height="1" fill="#aca899"/><rect x="1" y="1" width="5" height="1" fill="#aca899"/><rect x="6" y="1" width="2" height="1" fill="#fff"/><rect x="2" y="2" width="3" height="1" fill="#aca899"/><rect x="5" y="2" width="2" height="1" fill="#fff"/><rect x="3" y="3" width="1" height="1" fill="#aca899"/><rect x="4" y="3" width="2" height="1" fill="#fff"/><rect x="4" y="4" width="1" height="1" fill="#fff"/></svg></div>

<!-- buttons -->
<div class="btn raised" style="left:34px;top:584px;"><div class="t"><u>N</u>ew</div></div>
<div class="btn raised" style="left:139px;top:584px;"><div class="t"><u>S</u>ave</div></div>
<div class="btn raised" style="left:244px;top:584px;"><div class="t">Re<u>v</u>ert</div></div>
<div class="btn raised" style="left:349px;top:584px;"><div class="t">Dro<u>p</u></div></div>
<div class="btn" style="left:453px;top:584px;border:1px solid #000;"><div class="raised" style="left:0;top:0;width:78px;height:21px;"></div><div class="t" style="top:3px;width:78px;"><u>C</u>lose</div></div>
<div class="btn raised" style="left:558px;top:584px;"><div class="t">He<u>l</u>p</div></div>

</body></html>
